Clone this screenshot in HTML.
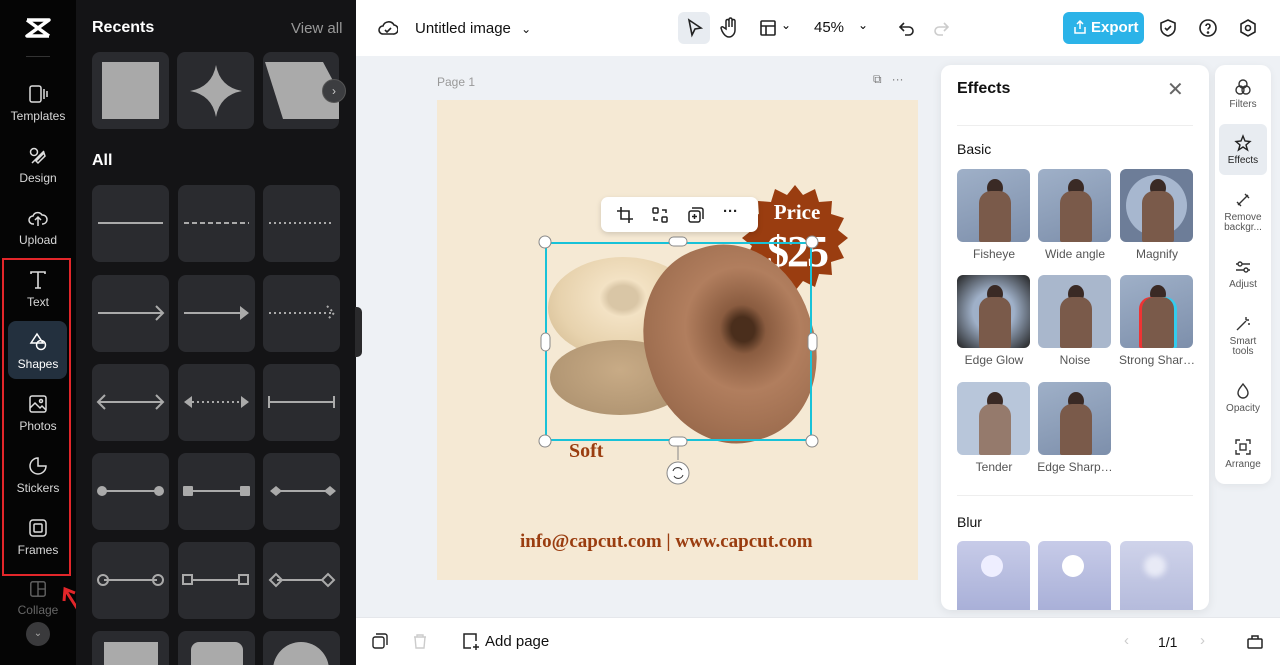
<!DOCTYPE html>
<html><head><meta charset="utf-8"><style>
*{box-sizing:border-box;margin:0;padding:0}
html,body{width:1280px;height:665px;overflow:hidden}
body{font-family:"Liberation Sans",sans-serif;background:#eef1f5;position:relative}
.abs{position:absolute}
.rail{left:0;top:0;width:76px;height:665px;background:#050505}
.ri{position:absolute;left:0;width:76px;text-align:center;color:#d8d8d8;font-size:12px}
.ri svg{display:block;margin:0 auto 5px}
.panel{left:76px;top:0;width:280px;height:665px;background:#141416;overflow:hidden}
.tile{position:absolute;width:77px;height:77px;background:#2a2b2f;border-radius:8px}
.top{left:356px;top:0;width:924px;height:56px;background:#fff}
.bot{left:356px;top:617px;width:924px;height:48px;background:#fff;border-top:1px solid #e5e7eb}
.thumb{position:absolute;width:73px;height:73px;border-radius:6px;overflow:hidden;background:linear-gradient(160deg,#9fb0c8,#7d8fab)}
.thumb .p{position:absolute;left:22px;top:22px;width:32px;height:51px;background:#7a5a4a;border-radius:12px 12px 2px 2px}
.thumb .h{position:absolute;left:30px;top:10px;width:16px;height:18px;background:#3a2a25;border-radius:50%}
.lab{position:absolute;width:80px;text-align:center;font-size:12px;color:#555}
.rr{position:absolute;left:1215px;width:56px;text-align:center;font-size:10px;color:#555;line-height:10px}
.rr svg{display:block;margin:0 auto 4px}
</style></head><body>
<div class="abs rail">
  <svg class="abs" style="left:25px;top:17px" width="26" height="22" viewBox="0 0 26 22"><path d="M2 3h22L2 19h22M2 3l22 16" stroke="#fff" stroke-width="3.5" fill="none" stroke-linejoin="round"/></svg>
  <div class="abs" style="left:26px;top:56px;width:24px;height:1px;background:#333"></div>
  <div class="ri" style="top:84px"><svg width="20" height="20" viewBox="0 0 20 20" fill="none" stroke="#ddd" stroke-width="1.5"><rect x="2" y="2" width="11" height="16" rx="2"/><path d="M16 5v10M19 7v6"/></svg>Templates</div>
  <div class="ri" style="top:146px"><svg width="20" height="20" viewBox="0 0 20 20" fill="none" stroke="#ddd" stroke-width="1.5"><circle cx="6" cy="6" r="3.5"/><path d="M4 17l12-12M8 15l8-8 1 3-7 7z"/></svg>Design</div>
  <div class="ri" style="top:208px"><svg width="20" height="20" viewBox="0 0 20 20" fill="none" stroke="#ddd" stroke-width="1.5"><path d="M6 16H5a4 4 0 010-8 5 5 0 019-1 4 4 0 011 9h-1M10 18v-8M7 12l3-3 3 3"/></svg>Upload</div>
  <div class="abs" style="left:2px;top:258px;width:69px;height:318px;border:2px solid #e3262a"></div>
  <div class="ri" style="top:270px"><svg width="20" height="20" viewBox="0 0 20 20" fill="none" stroke="#ddd" stroke-width="1.6"><path d="M3 4V2h14v2M10 2v16M7 18h6"/></svg>Text</div>
  <div class="abs" style="left:8px;top:321px;width:59px;height:58px;background:#23303e;border-radius:8px"></div>
  <div class="ri" style="top:332px;color:#fff"><svg width="20" height="20" viewBox="0 0 20 20" fill="none" stroke="#fff" stroke-width="1.5"><path d="M9 2l6 9H3z"/><circle cx="13" cy="13" r="4.5"/></svg>Shapes</div>
  <div class="ri" style="top:394px"><svg width="20" height="20" viewBox="0 0 20 20" fill="none" stroke="#ddd" stroke-width="1.5"><rect x="2" y="2" width="16" height="16" rx="2"/><path d="M2 14l5-5 5 5 2-2 4 4"/><circle cx="13" cy="7" r="1.5"/></svg>Photos</div>
  <div class="ri" style="top:456px"><svg width="20" height="20" viewBox="0 0 20 20" fill="none" stroke="#ddd" stroke-width="1.5"><path d="M10 2a8 8 0 108 8h-8z"/></svg>Stickers</div>
  <div class="ri" style="top:518px"><svg width="20" height="20" viewBox="0 0 20 20" fill="none" stroke="#ddd" stroke-width="1.5"><rect x="2" y="2" width="16" height="16" rx="3"/><rect x="6" y="6" width="8" height="8" rx="1"/></svg>Frames</div>
  <div class="ri" style="top:580px;color:#666"><svg width="18" height="18" viewBox="0 0 20 20" fill="none" stroke="#666" stroke-width="1.5"><rect x="2" y="2" width="16" height="16" rx="2"/><path d="M10 2v16M10 10h8"/></svg>Collage</div>
  <div class="abs" style="left:26px;top:622px;width:24px;height:24px;border-radius:50%;background:#3a3a3c;color:#aaa;text-align:center;font-size:10px;line-height:24px">⌄</div>
  <svg class="abs" style="left:60px;top:585px" width="28" height="38" viewBox="0 0 28 38"><path d="M24 34L6 6M4 16L5 4l10 4" stroke="#e3262a" stroke-width="3" fill="none"/></svg>
</div>
<div class="abs panel">
  <div class="abs" style="left:16px;top:19px;color:#fff;font-weight:bold;font-size:16px">Recents</div>
  <div class="abs" style="left:215px;top:20px;color:#999;font-size:15px">View all</div>
  <div class="tile" style="left:16px;top:52px"><div class="abs" style="left:10px;top:10px;width:57px;height:57px;background:#a9a9a9"></div></div>
  <div class="tile" style="left:101px;top:52px"><svg class="abs" style="left:13px;top:13px" width="52" height="52" viewBox="0 0 52 52"><path d="M26 0Q30 22 52 26Q30 30 26 52Q22 30 0 26Q22 22 26 0z" fill="#aaa"/></svg></div>
  <div class="tile" style="left:187px;top:52px;width:76px"><svg class="abs" style="left:2px;top:10px" width="74" height="57" viewBox="0 0 74 57"><path d="M0 0h58l16 30v27H18z" fill="#aaa"/></svg></div>
  <div class="abs" style="left:246px;top:79px;width:24px;height:24px;border-radius:50%;background:#3c3d40;border:1px solid #555;color:#ccc;font-size:12px;text-align:center;line-height:22px">›</div>
  <div class="abs" style="left:16px;top:152px;color:#fff;font-weight:bold;font-size:16px">All</div>
  <svg class="abs" style="left:16px;top:185px" width="248" height="480">
    <g fill="#2a2b2f"><rect x="0" y="0" width="77" height="77" rx="8"/><rect x="86" y="0" width="77" height="77" rx="8"/><rect x="171" y="0" width="77" height="77" rx="8"/>
    <rect x="0" y="90" width="77" height="77" rx="8"/><rect x="86" y="90" width="77" height="77" rx="8"/><rect x="171" y="90" width="77" height="77" rx="8"/>
    <rect x="0" y="179" width="77" height="77" rx="8"/><rect x="86" y="179" width="77" height="77" rx="8"/><rect x="171" y="179" width="77" height="77" rx="8"/>
    <rect x="0" y="268" width="77" height="77" rx="8"/><rect x="86" y="268" width="77" height="77" rx="8"/><rect x="171" y="268" width="77" height="77" rx="8"/>
    <rect x="0" y="357" width="77" height="77" rx="8"/><rect x="86" y="357" width="77" height="77" rx="8"/><rect x="171" y="357" width="77" height="77" rx="8"/>
    <rect x="0" y="446" width="77" height="77" rx="8"/><rect x="86" y="446" width="77" height="77" rx="8"/><rect x="171" y="446" width="77" height="77" rx="8"/></g>
    <g stroke="#aaa" stroke-width="2" fill="none">
    <path d="M6 38h65"/><path d="M92 38h65" stroke-dasharray="5 3"/><path d="M177 38h65" stroke-dasharray="2 3"/>
    <path d="M6 128h65M64 121l7 7-7 7"/><path d="M92 128h58"/><path d="M177 128h65M235 121l7 7-7 7" stroke-dasharray="2 3"/>
    <path d="M6 217h65M13 210l-7 7 7 7M64 210l7 7-7 7"/><path d="M100 217h48" stroke-dasharray="2 3"/><path d="M177 217h65M177 211v12M242 211v12"/>
    <path d="M10 306h57"/><path d="M96 306h57"/><path d="M181 306h57"/>
    <path d="M12 395h53"/><circle cx="11" cy="395" r="5"/><circle cx="66" cy="395" r="5"/>
    <path d="M99 395h47"/><rect x="91" y="390" width="9" height="9"/><rect x="147" y="390" width="9" height="9"/>
    <path d="M185 395h45"/><path d="M178 395l6-6 6 6-6 6zM230 395l6-6 6 6-6 6z"/></g>
    <g fill="#aaa"><path d="M148 121l9 7-9 7z"/><path d="M92 217l8-6v12z M157 217l-8-6v12z"/>
    <circle cx="10" cy="306" r="5"/><circle cx="67" cy="306" r="5"/><rect x="91" y="301" width="10" height="10" rx="1"/><rect x="148" y="301" width="10" height="10" rx="1"/><path d="M178 306l6-5 6 5-6 5zM232 306l6-5 6 5-6 5z"/>
    <rect x="12" y="457" width="54" height="40"/><rect x="99" y="457" width="52" height="40" rx="8"/><circle cx="209" cy="485" r="28"/></g>
  </svg>
</div>
<div class="abs" style="left:355px;top:307px;width:7px;height:50px;background:#2a2a2c;border-radius:0 5px 5px 0"></div>
<div class="abs top">
  <svg class="abs" style="left:22px;top:19px" width="20" height="18" viewBox="0 0 20 18" fill="none" stroke="#222" stroke-width="1.6"><path d="M5 15a4 4 0 010-8 6 6 0 0111-1 4.5 4.5 0 01-1 9z"/><path d="M7 11l2 2 4-4"/></svg>
  <div class="abs" style="left:59px;top:20px;font-size:15px;color:#111">Untitled image <span style="font-size:12px;margin-left:6px">⌄</span></div>
  <div class="abs" style="left:322px;top:12px;width:32px;height:32px;background:#e8ecf1;border-radius:6px"></div>
  <svg class="abs" style="left:330px;top:18px" width="18" height="20" viewBox="0 0 18 20" fill="none" stroke="#222" stroke-width="1.6"><path d="M3 2l12 8-6 1-3 6z"/></svg>
  <svg class="abs" style="left:364px;top:17px" width="20" height="22" viewBox="0 0 20 22" fill="none" stroke="#222" stroke-width="1.5"><path d="M6 12V4a1.5 1.5 0 013 0v6V2.5a1.5 1.5 0 013 0V10V4a1.5 1.5 0 013 0v9c0 4-3 7-6 7-3 0-5-2-7-6l-1-3a1.3 1.3 0 012-1z"/></svg>
  <svg class="abs" style="left:403px;top:19px" width="18" height="18" viewBox="0 0 18 18" fill="none" stroke="#222" stroke-width="1.6"><rect x="2" y="2" width="14" height="14" rx="1"/><path d="M2 7h14M7 7v9"/></svg>
  <div class="abs" style="left:425px;top:18px;font-size:12px">⌄</div>
  <div class="abs" style="left:458px;top:19px;font-size:15px;color:#111">45%</div>
  <div class="abs" style="left:502px;top:18px;font-size:12px">⌄</div>
  <svg class="abs" style="left:541px;top:19px" width="18" height="18" viewBox="0 0 18 18" fill="none" stroke="#222" stroke-width="1.6"><path d="M4 8h8a4 4 0 010 8H8M7 4L3 8l4 4"/></svg>
  <svg class="abs" style="left:577px;top:19px" width="18" height="18" viewBox="0 0 18 18" fill="none" stroke="#ccc" stroke-width="1.6"><path d="M14 8H6a4 4 0 000 8h4M11 4l4 4-4 4"/></svg>
  <div class="abs" style="left:707px;top:12px;width:81px;height:32px;background:#2bb3e8;border-radius:6px;color:#fff;font-size:15px;line-height:32px;padding-left:28px;font-weight:bold">Export</div>
  <svg class="abs" style="left:717px;top:20px" width="14" height="14" viewBox="0 0 14 14" fill="none" stroke="#fff" stroke-width="1.5"><path d="M7 9V1M4 4l3-3 3 3M2 7v6h10V7"/></svg>
  <svg class="abs" style="left:802px;top:18px" width="20" height="20" viewBox="0 0 20 20" fill="none" stroke="#222" stroke-width="1.6"><path d="M10 2l7 3v5c0 4-3 7-7 8-4-1-7-4-7-8V5z"/><path d="M7 10l2 2 4-4"/></svg>
  <svg class="abs" style="left:842px;top:18px" width="20" height="20" viewBox="0 0 20 20" fill="none" stroke="#222" stroke-width="1.6"><circle cx="10" cy="10" r="8"/><path d="M8 8a2 2 0 114 0c0 2-2 2-2 3.5"/><circle cx="10" cy="14.5" r=".5" fill="#222"/></svg>
  <svg class="abs" style="left:882px;top:18px" width="20" height="20" viewBox="0 0 20 20" fill="none" stroke="#222" stroke-width="1.6"><path d="M10 2l7 4v8l-7 4-7-4V6z"/><circle cx="10" cy="10" r="2.5"/></svg>
</div>
<div class="abs" style="left:437px;top:75px;font-size:12px;color:#999">Page 1</div>
<div class="abs" style="left:873px;top:72px;font-size:12px;color:#777">⧉ &nbsp; ···</div>
<div class="abs" style="left:437px;top:100px;width:481px;height:480px;background:#f5e9d4"></div>
<svg class="abs" style="left:737px;top:183px" width="116" height="116" viewBox="0 0 116 116"><path d="M58 2l8 10 12-6 4 13 13-1-1 13 13 4-6 12 10 8-10 8 6 12-13 4 1 13-13-1-4 13-12-6-8 10-8-10-12 6-4-13-13 1 1-13-13-4 6-12-10-8 10-8-6-12 13-4-1-13 13 1 4-13 12 6z" fill="#9a3d10"/>
<text x="60" y="36" text-anchor="middle" fill="#fff" font-family="Liberation Serif" font-weight="bold" font-size="21">Price</text>
<text x="60" y="83" text-anchor="middle" fill="#fff" font-family="Liberation Serif" font-weight="bold" font-size="44" letter-spacing="-2">$25</text></svg>
<div class="abs" style="left:548px;top:257px;width:150px;height:102px;border-radius:50%;background:radial-gradient(ellipse at 50% 40%,#d9c6a6 14%,#f3e2c4 22%,#e7d2ad 60%,#cdb48a 100%)"></div>
<div class="abs" style="left:550px;top:340px;width:140px;height:75px;border-radius:50%;background:radial-gradient(ellipse at 50% 40%,#c8ab86,#a98e6c)"></div>
<div class="abs" style="left:646px;top:244px;width:168px;height:200px;border-radius:48%;transform:rotate(-18deg);background:radial-gradient(ellipse at 60% 45%,#4a2e1c 8%,#8a5c40 16%,#b17e5e 40%,#9b6b4d 75%,#7a4e34 100%)"></div>
<div class="abs" style="left:569px;top:440px;font-family:'Liberation Serif',serif;font-weight:bold;font-size:20px;color:#9a3d10">Soft</div>
<div class="abs" style="left:520px;top:531px;font-family:'Liberation Serif',serif;font-weight:bold;font-size:19px;color:#9a3d10">info@capcut.com | www.capcut.com</div>
<div class="abs" style="left:545px;top:242px;width:267px;height:199px;border:2px solid #18c2d8"></div>
<svg class="abs" style="left:535px;top:232px" width="290" height="260" viewBox="0 0 290 260" fill="#fff" stroke="#888" stroke-width="1">
<circle cx="10" cy="10" r="6"/><circle cx="277" cy="10" r="6"/><circle cx="10" cy="209" r="6"/><circle cx="277" cy="209" r="6"/>
<rect x="134" y="5" width="18" height="9" rx="4.5"/><rect x="134" y="205" width="18" height="9" rx="4.5"/><rect x="6" y="101" width="9" height="18" rx="4.5"/><rect x="273" y="101" width="9" height="18" rx="4.5"/>
<path d="M143 214v14"/><circle cx="143" cy="241" r="11"/><path d="M138 239a5 5 0 019-1M148 243a5 5 0 01-9 1" stroke="#333"/></svg>
<div class="abs" style="left:601px;top:197px;width:157px;height:35px;background:#fff;border-radius:7px;box-shadow:0 2px 6px rgba(0,0,0,.15);font-size:15px;color:#222">
<svg class="abs" style="left:15px;top:9px" width="18" height="18" viewBox="0 0 18 18" fill="none" stroke="#222" stroke-width="1.6"><path d="M5 1v12h12M1 5h12v12"/></svg>
<svg class="abs" style="left:50px;top:9px" width="18" height="18" viewBox="0 0 18 18" fill="none" stroke="#222" stroke-width="1.5"><rect x="2" y="2" width="5" height="5" rx="1"/><rect x="11" y="11" width="5" height="5" rx="1"/><path d="M11 4h4v3M7 14H3v-3"/></svg>
<svg class="abs" style="left:86px;top:9px" width="18" height="18" viewBox="0 0 18 18" fill="none" stroke="#222" stroke-width="1.5"><rect x="2" y="5" width="11" height="11" rx="2"/><path d="M5 2h9a2 2 0 012 2v9M7.5 8v5M5 10.5h5"/></svg>
<span class="abs" style="left:122px;top:6px;font-weight:bold">···</span></div>
<div class="abs" style="left:941px;top:65px;width:268px;height:545px;background:#fff;border-radius:10px;box-shadow:0 2px 10px rgba(0,0,0,.08);overflow:hidden">
  <div class="abs" style="left:16px;top:15px;font-size:16px;font-weight:bold;color:#111">Effects</div>
  <div class="abs" style="left:226px;top:12px;font-size:20px;color:#666">✕</div>
  <div class="abs" style="left:16px;top:60px;width:236px;height:1px;background:#eee"></div>
  <div class="abs" style="left:16px;top:76px;font-size:14px;color:#111">Basic</div>
  <div class="abs" style="left:16px;top:430px;width:236px;height:1px;background:#eee"></div>
  <div class="abs" style="left:16px;top:449px;font-size:14px;color:#111">Blur</div>
</div>
<div class="thumb" style="left:957px;top:169px"><div class="h"></div><div class="p"></div></div>
<div class="thumb" style="left:1038px;top:169px"><div class="h"></div><div class="p"></div></div>
<div class="thumb" style="left:1120px;top:169px;background:#6d7d98"><div class="abs" style="left:6px;top:6px;width:61px;height:61px;border-radius:50%;background:#a7b7cf"></div><div class="h"></div><div class="p"></div></div>
<div class="lab" style="left:954px;top:247px">Fisheye</div><div class="lab" style="left:1035px;top:247px">Wide angle</div><div class="lab" style="left:1117px;top:247px">Magnify</div>
<div class="thumb" style="left:957px;top:275px;background:radial-gradient(#9fb0c8 40%,#222 100%)"><div class="h"></div><div class="p"></div></div>
<div class="thumb" style="left:1038px;top:275px;background:#a9b7cc"><div class="h"></div><div class="p"></div></div>
<div class="thumb" style="left:1120px;top:275px"><div class="h"></div><div class="p" style="box-shadow:-3px 0 #e33,3px 0 #3ce"></div></div>
<div class="lab" style="left:954px;top:353px">Edge Glow</div><div class="lab" style="left:1035px;top:353px">Noise</div><div class="lab" style="left:1114px;top:353px;width:86px">Strong Shar…</div>
<div class="thumb" style="left:957px;top:382px;background:#b8c6da"><div class="h"></div><div class="p" style="background:#957a6c"></div></div>
<div class="thumb" style="left:1038px;top:382px"><div class="h"></div><div class="p"></div></div>
<div class="lab" style="left:954px;top:460px">Tender</div><div class="lab" style="left:1033px;top:460px;width:84px">Edge Sharp…</div>
<div class="thumb" style="left:957px;top:541px;height:69px;border-radius:6px 6px 0 0;background:linear-gradient(#c7cbe8,#a9b0d8)"><div class="abs" style="left:24px;top:14px;width:22px;height:22px;border-radius:50%;background:#eef"></div></div>
<div class="thumb" style="left:1038px;top:541px;height:69px;border-radius:6px 6px 0 0;background:linear-gradient(#c7cbe8,#a9b0d8)"><div class="abs" style="left:24px;top:14px;width:22px;height:22px;border-radius:50%;background:#fff"></div></div>
<div class="thumb" style="left:1120px;top:541px;height:69px;border-radius:6px 6px 0 0;background:linear-gradient(#cfd3ea,#b5bbdc)"><div class="abs" style="left:24px;top:14px;width:22px;height:22px;border-radius:50%;background:#e8eaf6;filter:blur(3px)"></div></div>
<div class="abs" style="left:1215px;top:65px;width:56px;height:419px;background:#fff;border-radius:10px;box-shadow:0 2px 8px rgba(0,0,0,.06)"></div>
<div class="abs" style="left:1219px;top:124px;width:48px;height:51px;background:#e8ecf1;border-radius:6px"></div>
<div class="rr" style="top:78px"><svg width="18" height="18" viewBox="0 0 18 18" fill="none" stroke="#333" stroke-width="1.4"><circle cx="9" cy="6" r="4"/><circle cx="6" cy="12" r="4"/><circle cx="12" cy="12" r="4"/></svg>Filters</div>
<div class="rr" style="top:134px;color:#222"><svg width="18" height="18" viewBox="0 0 18 18" fill="none" stroke="#222" stroke-width="1.4"><path d="M9 2l2 5 5 .5-4 3.5 1.5 5L9 13l-4.5 3L6 11 2 7.5 7 7z"/></svg>Effects</div>
<div class="rr" style="top:191px"><svg width="18" height="18" viewBox="0 0 18 18" fill="none" stroke="#333" stroke-width="1.4"><path d="M4 14L14 4M11 3l4 4M3 11l4 4"/></svg>Remove<br>backgr...</div>
<div class="rr" style="top:258px"><svg width="18" height="18" viewBox="0 0 18 18" fill="none" stroke="#333" stroke-width="1.4"><path d="M2 6h14M2 12h14"/><circle cx="6" cy="6" r="2" fill="#fff"/><circle cx="12" cy="12" r="2" fill="#fff"/></svg>Adjust</div>
<div class="rr" style="top:315px"><svg width="18" height="18" viewBox="0 0 18 18" fill="none" stroke="#333" stroke-width="1.4"><path d="M3 15L12 6M12 2v3M15 5h-3M14 9h2"/></svg>Smart<br>tools</div>
<div class="rr" style="top:382px"><svg width="18" height="18" viewBox="0 0 18 18" fill="none" stroke="#333" stroke-width="1.4"><path d="M9 2c3 4 5 6 5 9a5 5 0 01-10 0c0-3 2-5 5-9z"/></svg>Opacity</div>
<div class="rr" style="top:438px"><svg width="18" height="18" viewBox="0 0 18 18" fill="none" stroke="#333" stroke-width="1.4"><path d="M2 6V2h4M12 2h4v4M16 12v4h-4M6 16H2v-4"/><rect x="6" y="6" width="6" height="6"/></svg>Arrange</div>
<div class="abs bot">
  <svg class="abs" style="left:16px;top:15px" width="16" height="16" viewBox="0 0 16 16" fill="none" stroke="#222" stroke-width="1.4"><rect x="1" y="4" width="11" height="11" rx="2"/><path d="M4 1h9a2 2 0 012 2v9"/></svg>
  <svg class="abs" style="left:56px;top:15px" width="16" height="16" viewBox="0 0 16 16" fill="none" stroke="#ccc" stroke-width="1.4"><path d="M2 4h12M5 4V2h6v2M3 4l1 11h8l1-11"/></svg>
  <svg class="abs" style="left:106px;top:14px" width="18" height="18" viewBox="0 0 18 18" fill="none" stroke="#222" stroke-width="1.5"><path d="M14 9V2H2v14h7M14 12v6M11 15h6"/></svg>
  <div class="abs" style="left:129px;top:15px;font-size:15px;color:#111">Add page</div>
  <div class="abs" style="left:768px;top:14px;font-size:15px;color:#ccc">‹</div>
  <div class="abs" style="left:802px;top:16px;font-size:14px;color:#111">1/1</div>
  <div class="abs" style="left:844px;top:14px;font-size:15px;color:#ccc">›</div>
  <svg class="abs" style="left:890px;top:14px" width="18" height="18" viewBox="0 0 18 18" fill="none" stroke="#222" stroke-width="1.5"><rect x="2" y="7" width="14" height="9" rx="1"/><path d="M6 7V4h6v3"/></svg>
</div>
</body></html>
